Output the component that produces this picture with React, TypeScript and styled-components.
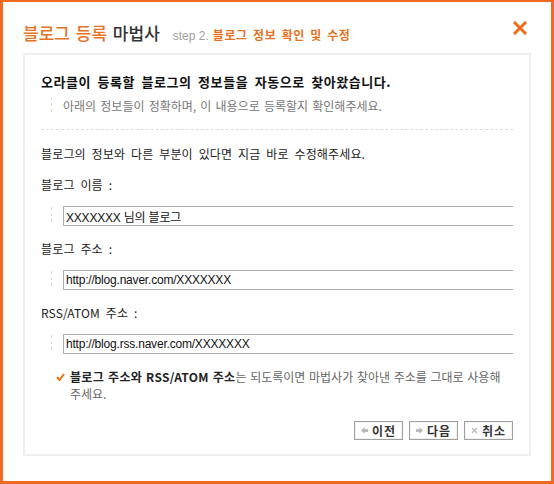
import React from "react";
import styled, { createGlobalStyle } from "styled-components";

const GlobalStyle = createGlobalStyle`
  html, body {
    margin: 0;
    padding: 0;
    background: #ffffff;
  }
  body {
    font-family: "Liberation Sans", "Noto Sans CJK KR", sans-serif;
    font-size: 12px;
    color: #222;
  }
`;

// --- Frame & header ---
const Frame = styled.div`
  width: 554px;
  height: 484px;
  box-sizing: border-box;
  border: 3px solid #f26a1f;
  border-top-width: 2px;
  display: flex;
  flex-direction: column;
  background: #fff;
`;

const Header = styled.div`
  display: flex;
  align-items: baseline;
  padding: 21px 20px 0 20px;
  height: 30px;
`;

const Title = styled.h1`
  margin: 0;
  font-family: "Noto Sans CJK KR", sans-serif;
  font-size: 17px;
  line-height: 20px;
  font-weight: 500;
  color: #333;
  word-spacing: 2px;
`;

const Accent = styled.span`
  color: #e6731f;
`;

const Step = styled.span`
  margin-left: 13px;
  font-family: "Liberation Sans", "Noto Sans CJK KR", sans-serif;
  font-size: 12px;
  color: #a0a0a0;
`;

const StepTitle = styled.span`
  font-family: "Noto Sans CJK KR", sans-serif;
  font-weight: 700;
  color: #e6731f;
  margin-left: 4px;
  letter-spacing: 0.6px;
  word-spacing: 2px;
`;

const Close = styled.button`
  margin-left: auto;
  align-self: flex-start;
  margin-top: -2px;
  margin-right: 4px;
  width: 14px;
  height: 14px;
  padding: 0;
  border: none;
  background: none;
  cursor: pointer;
  display: flex;
`;

// --- Panel ---
const Panel = styled.div`
  margin: 0 20px;
  border: 2px solid #efefef;
  padding: 19px 16px 14px 16px;
  display: flex;
  flex-direction: column;
`;

const Lead = styled.p`
  margin: 0;
  font-family: "Noto Sans CJK KR", sans-serif;
  font-size: 13px;
  line-height: 16px;
  font-weight: 700;
  color: #111;
  letter-spacing: 0.55px;
  word-spacing: 3px;
`;

const GuideRow = styled.div<{ $top: number }>`
  display: flex;
  align-items: center;
  margin-top: ${(p) => p.$top}px;
`;

const Guide = styled.span`
  width: 1px;
  height: 18px;
  margin: 0 11px 0 10px;
  flex-shrink: 0;
  background-image: repeating-linear-gradient(
    to bottom,
    #d8d8d8 0 3px,
    transparent 3px 6px
  );
`;

const Hint = styled.span`
  font-family: "Noto Sans CJK KR", sans-serif;
  font-size: 12px;
  line-height: 18px;
  color: #777;
  word-spacing: 1.5px;
`;

const Divider = styled.hr`
  margin: 14px 0 0 0;
  border: none;
  border-top: 1px dashed #dcdcdc;
  height: 0;
`;

const Text = styled.p<{ $top: number }>`
  margin: ${(p) => p.$top}px 0 0 0;
  font-family: "Noto Sans CJK KR", sans-serif;
  font-size: 12px;
  line-height: 16px;
  color: #222;
  letter-spacing: 0.15px;
  word-spacing: 3px;
`;

const Input = styled.input`
  flex: 1;
  height: 20px;
  box-sizing: border-box;
  padding: 0 2px;
  border: 1px solid #a7afaf;
  border-right: none;
  font-family: "Liberation Sans", "Noto Sans CJK KR", sans-serif;
  font-size: 12px;
  color: #111;
  outline: none;
  letter-spacing: -0.2px;
`;

const Note = styled.div`
  margin-top: 14px;
  display: flex;
  align-items: flex-start;
  padding-left: 15px;
`;

const Check = styled.span`
  flex-shrink: 0;
  width: 14px;
  height: 17px;
  display: flex;
  align-items: center;
`;

const NoteText = styled.p`
  margin: 0;
  font-family: "Noto Sans CJK KR", sans-serif;
  font-size: 12px;
  line-height: 17px;
  color: #666;
  letter-spacing: 0;
  word-spacing: 1px;
  word-break: keep-all;

  b {
    color: #222;
    font-weight: 700;
    letter-spacing: 0.3px;
  }
`;

const Buttons = styled.div`
  display: flex;
  justify-content: flex-end;
  gap: 6px;
  margin-top: 19px;
`;

const Button = styled.button`
  width: 49px;
  height: 19px;
  box-sizing: border-box;
  padding: 0;
  border: 1px solid #a0a0a0;
  box-shadow: inset 0 0 0 1px #f4f4f4;
  background: #fff;
  display: flex;
  align-items: center;
  justify-content: center;
  gap: 4px;
  font-family: "Noto Sans CJK KR", sans-serif;
  font-size: 12px;
  font-weight: 700;
  color: #333;
  letter-spacing: 1px;
  cursor: pointer;
`;

const fields = [
  { label: "블로그 이름 :", value: "XXXXXXX 님의 블로그" },
  { label: "블로그 주소 :", value: "http://blog.naver.com/XXXXXXX" },
  { label: "RSS/ATOM 주소 :", value: "http://blog.rss.naver.com/XXXXXXX" },
];

export default function App() {
  return (
    <>
      <GlobalStyle />
      <Frame>
        <Header>
          <Title>
            <Accent>블로그 등록</Accent> 마법사
          </Title>
          <Step>
            step 2.<StepTitle>블로그 정보 확인 및 수정</StepTitle>
          </Step>
          <Close aria-label="닫기">
            <svg width="14" height="14" viewBox="0 0 14 14">
              <path
                d="M2 2 L12 12 M12 2 L2 12"
                stroke="#ee6a1c"
                strokeWidth="3"
                strokeLinecap="square"
              />
            </svg>
          </Close>
        </Header>
        <Panel>
          <Lead>오라클이 등록할 블로그의 정보들을 자동으로 찾아왔습니다.</Lead>
          <GuideRow $top={7}>
            <Guide />
            <Hint>아래의 정보들이 정확하며, 이 내용으로 등록할지 확인해주세요.</Hint>
          </GuideRow>
          <Divider />
          <Text $top={16}>블로그의 정보와 다른 부분이 있다면 지금 바로 수정해주세요.</Text>
          {fields.map((f) => (
            <React.Fragment key={f.label}>
              <Text $top={15}>{f.label}</Text>
              <GuideRow $top={13}>
                <Guide />
                <Input defaultValue={f.value} />
              </GuideRow>
            </React.Fragment>
          ))}
          <Note>
            <Check>
              <svg width="9" height="8" viewBox="0 0 9 8">
                <path
                  d="M1 4 L3.5 7 L8 1"
                  stroke="#e8731c"
                  strokeWidth="2"
                  fill="none"
                />
              </svg>
            </Check>
            <NoteText>
              <b>블로그 주소와 RSS/ATOM 주소</b>는 되도록이면 마법사가 찾아낸 주소를 그대로 사용해
              주세요.
            </NoteText>
          </Note>
          <Buttons>
            <Button>
              <svg width="7" height="7" viewBox="0 0 7 7">
                <path d="M0 3.5 L3.5 0 V2 H7 V5 H3.5 V7 Z" fill="#bbb" />
              </svg>
              이전
            </Button>
            <Button>
              <svg width="7" height="7" viewBox="0 0 7 7">
                <path d="M7 3.5 L3.5 0 V2 H0 V5 H3.5 V7 Z" fill="#bbb" />
              </svg>
              다음
            </Button>
            <Button>
              <svg width="7" height="7" viewBox="0 0 7 7">
                <path d="M1 1 L6 6 M6 1 L1 6" stroke="#bbb" strokeWidth="1.3" />
              </svg>
              취소
            </Button>
          </Buttons>
        </Panel>
      </Frame>
    </>
  );
}
